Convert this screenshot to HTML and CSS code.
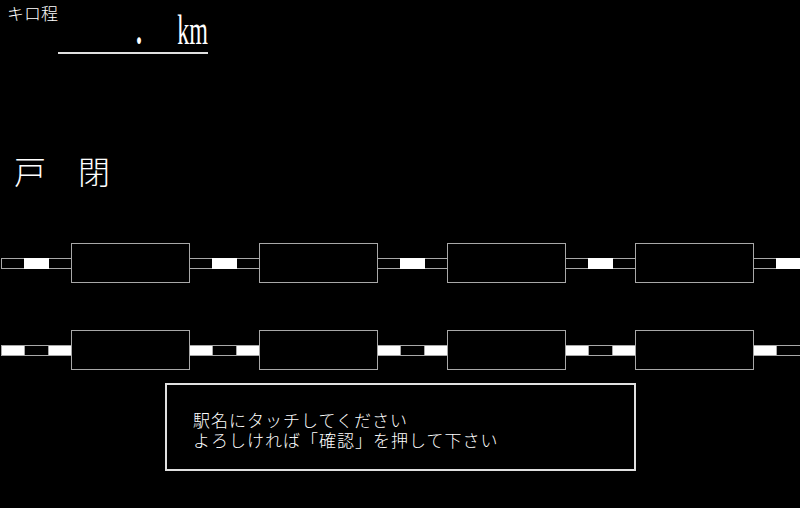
FILE: index.html
```html
<!DOCTYPE html>
<html lang="ja">
<head>
<meta charset="utf-8">
<link rel="stylesheet" href="styles.css">
</head>
<body>
<div class="screen">
  <div class="top">
    <div class="label">キロ程</div>
    <div class="field">
      <span class="tall dot">.</span>
      <span class="tall km">km</span>
    </div>
  </div>
  <div class="door">戸　閉</div>
  <div class="row row1">
    <div class="link first"><div class="seg"></div></div>
    <div class="car"></div>
    <div class="link"><div class="seg"></div></div>
    <div class="car"></div>
    <div class="link"><div class="seg"></div></div>
    <div class="car"></div>
    <div class="link"><div class="seg"></div></div>
    <div class="car"></div>
    <div class="link"><div class="seg"></div></div>
  </div>
  <div class="row row2">
    <div class="link first"><div class="seg"></div></div>
    <div class="car"></div>
    <div class="link"><div class="seg"></div></div>
    <div class="car"></div>
    <div class="link"><div class="seg"></div></div>
    <div class="car"></div>
    <div class="link"><div class="seg"></div></div>
    <div class="car"></div>
    <div class="link"><div class="seg"></div></div>
  </div>
  <div class="msg">
    <div class="line">駅名にタッチしてください</div>
    <div class="line">よろしければ「確認」を押して下さい</div>
  </div>
</div>
</body>
</html>
```
FILE: styles.css
```css
html, body {
  margin: 0;
  padding: 0;
  background: #000;
}
.screen {
  width: 800px;
  height: 508px;
  overflow: hidden;
  background: #000;
  color: #fff;
  font-family: "Noto Sans CJK JP", "Noto Sans", sans-serif;
}
.top {
  display: flex;
  align-items: flex-start;
  height: 60px;
}
.label {
  font-size: 17px;
  line-height: 18px;
  padding: 4px 0 0 7px;
  font-weight: 300;
}
.field {
  width: 150px;
  height: 51px;
  border-bottom: 2px solid #e0e0e0;
  display: flex;
  align-items: flex-end;
  padding-bottom: 1px;
  box-sizing: content-box;
}
.tall {
  display: inline-block;
  font-family: "Liberation Serif", serif;
  font-size: 24px;
  line-height: 24px;
  transform: scaleY(1.77);
  transform-origin: bottom;
}
.dot {
  margin-left: 78px;
  font-weight: bold;
}
.km {
  margin-left: auto;
}
.door {
  margin-top: 94px;
  padding-left: 14px;
  font-size: 32px;
  line-height: 32px;
  height: 32px;
  font-weight: 300;
}
.row {
  display: flex;
  align-items: center;
  height: 40px;
  padding-left: 1px;
  overflow: hidden;
  width: 800px;
  box-sizing: border-box;
}
.row1 { margin-top: 57px; }
.row2 { margin-top: 47px; }
.car {
  flex: 0 0 119px;
  height: 40px;
  box-sizing: border-box;
  border: 1px solid #a8a8a8;
}
.link {
  flex: 0 0 69px;
  height: 11px;
  box-sizing: border-box;
  border-top: 1px solid #a8a8a8;
  border-bottom: 1px solid #a8a8a8;
  display: flex;
  justify-content: center;
}
.link.first {
  flex-basis: 70px;
  border-left: 1px solid #a8a8a8;
}
.seg {
  width: 25px;
  margin: -1px 0;
  box-sizing: border-box;
}
.row1 .seg {
  background: #fff;
}
.row2 .link {
  background: #fff;
}
.row2 .seg {
  background: #000;
  border: 1px solid #a8a8a8;
}
.msg {
  margin-top: 13px;
  margin-left: 165px;
  width: 471px;
  height: 88px;
  box-sizing: border-box;
  border: 2px solid #e0e0e0;
  padding: 25px 0 0 26px;
  font-size: 17px;
  letter-spacing: 1px;
  line-height: 20px;
  font-weight: 300;
}
```
